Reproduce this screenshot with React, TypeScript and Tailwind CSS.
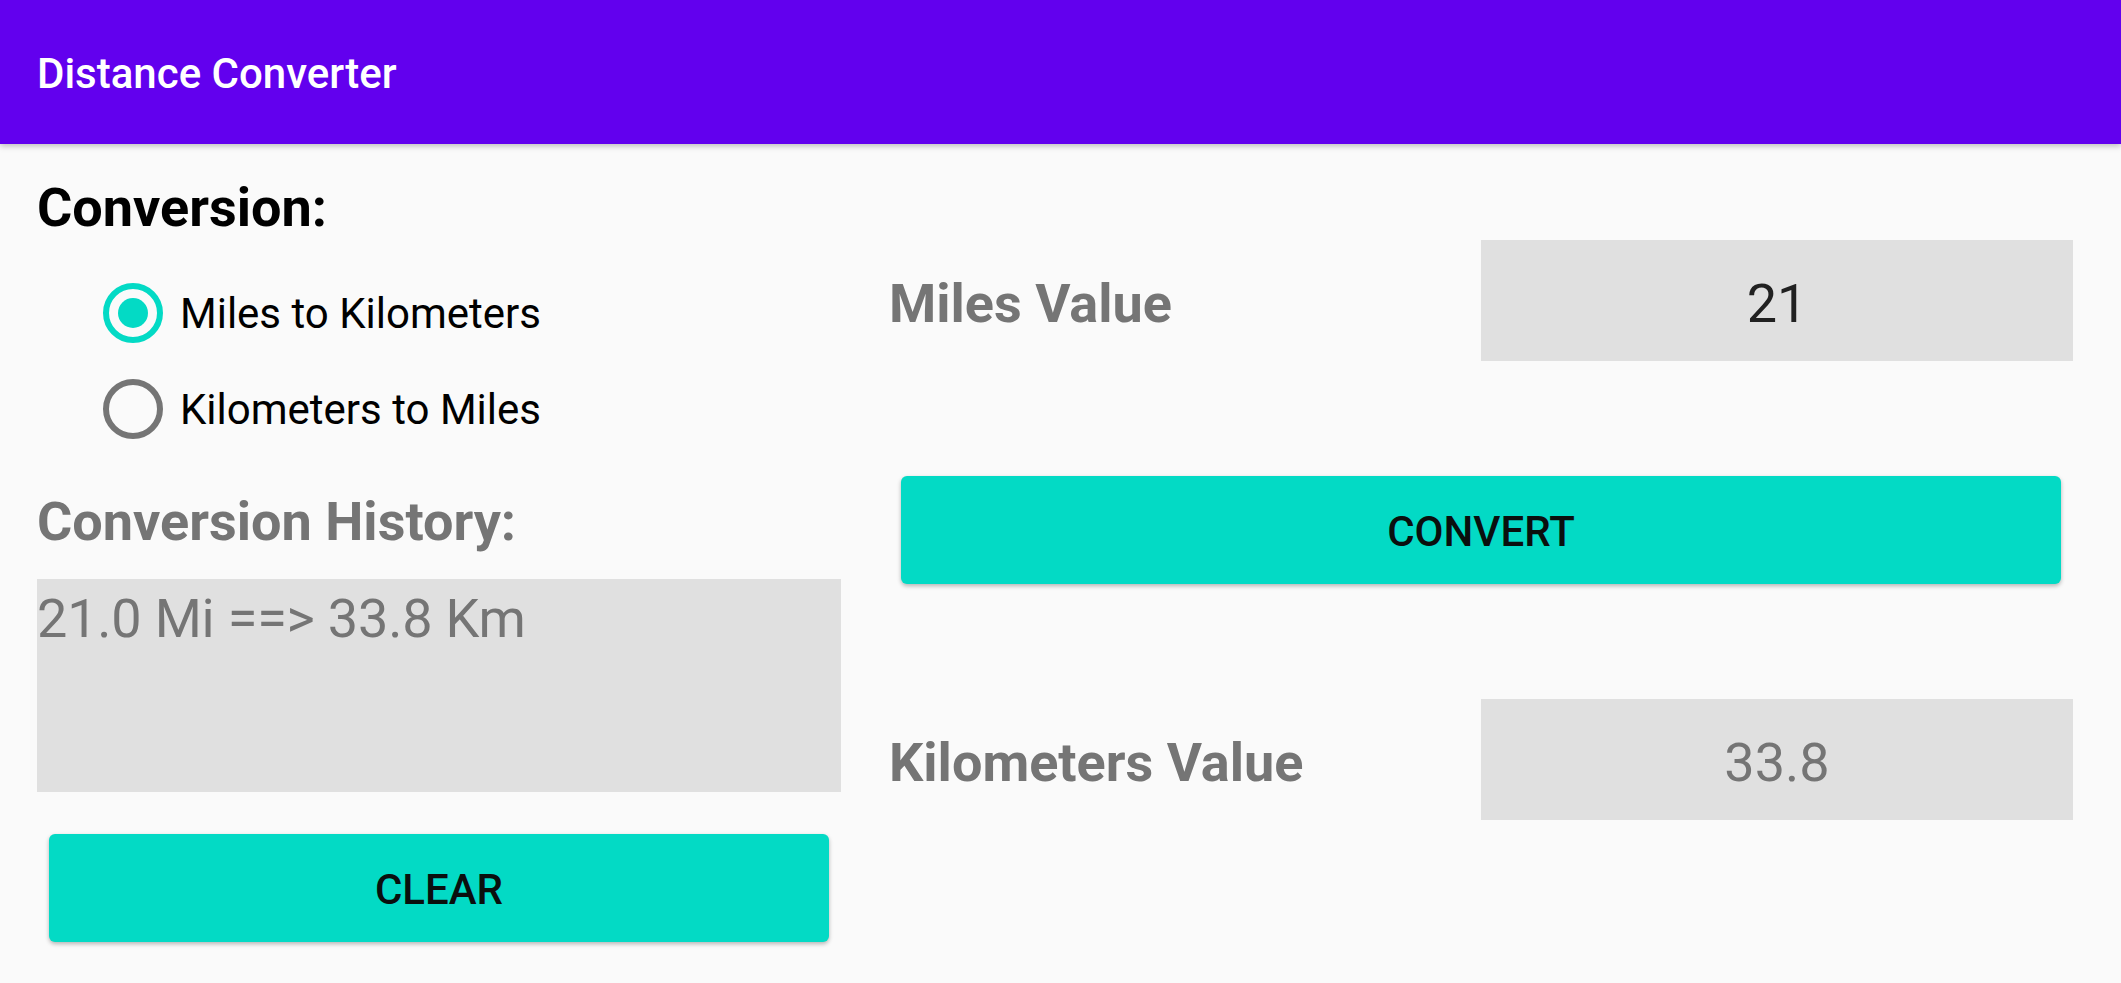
import React from "react";

function Radio({ checked, label }: { checked: boolean; label: string }) {
  return (
    <div className="flex h-[96px] items-center pl-[66px]">
      <div
        className={
          "flex h-[60px] w-[60px] items-center justify-center rounded-full border-[6px] " +
          (checked ? "border-[#03dac5]" : "border-[#757575]")
        }
      >
        {checked && <div className="h-[30px] w-[30px] rounded-full bg-[#03dac5]" />}
      </div>
      <span className="ml-[17px] pt-[2px] text-[42px] leading-[50px] text-black">{label}</span>
    </div>
  );
}

function ValueRow({ label, value, dark }: { label: string; value: string; dark: boolean }) {
  return (
    <div className="flex h-[121px] items-center">
      <div className="flex-1 pt-[6px] text-[54px] font-bold leading-[64px] text-[#757575]">{label}</div>
      <div className="flex h-[121px] w-[592px] items-center justify-center bg-[#e0e0e0] pt-[6px]">
        <span className={"text-[54px] leading-[64px] " + (dark ? "text-[#212121]" : "text-[#757575]")}>
          {value}
        </span>
      </div>
    </div>
  );
}

function Btn({ label }: { label: string }) {
  return (
    <div className="mx-[12px] flex h-[108px] items-center justify-center rounded-[6px] bg-[#03dac5] pt-[3px] shadow-[0_2px_4px_rgba(0,0,0,0.28)]">
      <span className="text-[42px] font-medium leading-[50px] text-[#0a0f0e]">{label}</span>
    </div>
  );
}

export default function App() {
  return (
    <div
      className="h-[983px] w-full overflow-hidden bg-[#fafafa]"
      style={{ fontFamily: "Roboto, 'Noto Sans', sans-serif" }}
    >
      <div className="relative z-10 flex h-[144px] items-center bg-[#6200ee] pl-[37px] pt-[4px] shadow-[0_2px_6px_rgba(0,0,0,0.25)]">
        <span className="text-[42px] font-medium leading-[50px] text-white">Distance Converter</span>
      </div>
      <div className="flex gap-[48px] pl-[37px] pr-[48px]">
        <div className="flex w-[804px] flex-col">
          <div className="mt-[32px] text-[54px] font-bold leading-[64px] text-black">Conversion:</div>
          <div className="mt-[25px] flex flex-col">
            <Radio checked={true} label="Miles to Kilometers" />
            <Radio checked={false} label="Kilometers to Miles" />
          </div>
          <div className="mt-[33px] text-[54px] font-bold leading-[64px] text-[#757575]">Conversion History:</div>
          <div className="mt-[25px] h-[213px] bg-[#e0e0e0] pt-[8px]">
            <div className="text-[54px] leading-[64px] tracking-[-0.2px] text-[#757575]">21.0 Mi ==&gt; 33.8 Km</div>
          </div>
          <div className="mt-[42px]">
            <Btn label="CLEAR" />
          </div>
        </div>
        <div className="flex flex-1 flex-col pt-[96px]">
          <ValueRow label="Miles Value" value="21" dark={true} />
          <div className="mt-[115px]">
            <Btn label="CONVERT" />
          </div>
          <div className="mt-[115px]">
            <ValueRow label="Kilometers Value" value="33.8" dark={false} />
          </div>
        </div>
      </div>
    </div>
  );
}
